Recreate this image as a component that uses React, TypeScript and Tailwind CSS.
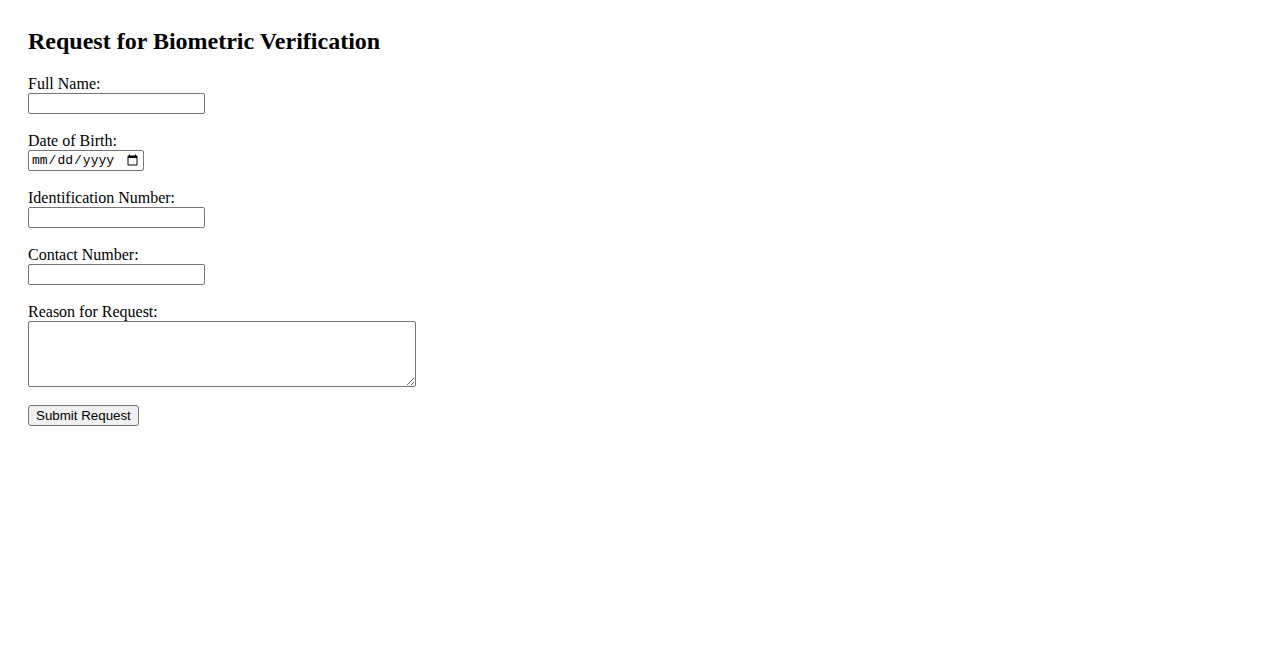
const fields = [
  { id: "fullName", label: "Full Name:", type: "text" },
  { id: "dob", label: "Date of Birth:", type: "date" },
  { id: "idNumber", label: "Identification Number:", type: "text" },
  { id: "contact", label: "Contact Number:", type: "tel" },
];

export default function App() {
  return (
    <div className="min-h-screen bg-white px-[28px] pt-[27px] text-black font-['Liberation_Serif','Times_New_Roman',serif]">
      <h2 className="mb-[19.5px] text-[24px] font-bold leading-[28px]">Request for Biometric Verification</h2>
      <form className="flex flex-col items-start" onSubmit={(e) => e.preventDefault()}>
        {fields.map((f) => (
          <div key={f.id} className="mb-[18px] flex flex-col items-start">
            <label htmlFor={f.id} className="text-[16px] leading-[18px]">
              {f.label}
            </label>
            {f.type === "date" ? (
              <input
                id={f.id}
                type="date"
                className="h-[21px] w-[116px] rounded-[2px] border border-[#767676] bg-white px-[2px] text-[13px] leading-[17px] font-['Liberation_Mono','Courier_New',monospace]"
              />
            ) : (
              <input
                id={f.id}
                type={f.type}
                className="h-[21px] w-[177px] rounded-[2px] border border-[#767676] bg-white px-[2px] text-[13.33px] font-['Liberation_Sans',Arial,sans-serif]"
              />
            )}
          </div>
        ))}
        <div className="mb-[18px] flex flex-col items-start">
          <label htmlFor="reason" className="text-[16px] leading-[18px]">
            Reason for Request:
          </label>
          <textarea
            id="reason"
            className="h-[66px] w-[388px] rounded-[2px] border border-[#767676] bg-white px-[2px] text-[13.33px] font-['Liberation_Mono',monospace]"
          />
        </div>
        <button
          type="submit"
          className="h-[21px] rounded-[3px] border border-[#767676] bg-[#efefef] px-[7px] text-[13.33px] leading-[17px] text-black font-['Liberation_Sans',Arial,sans-serif]"
        >
          Submit Request
        </button>
      </form>
    </div>
  );
}
